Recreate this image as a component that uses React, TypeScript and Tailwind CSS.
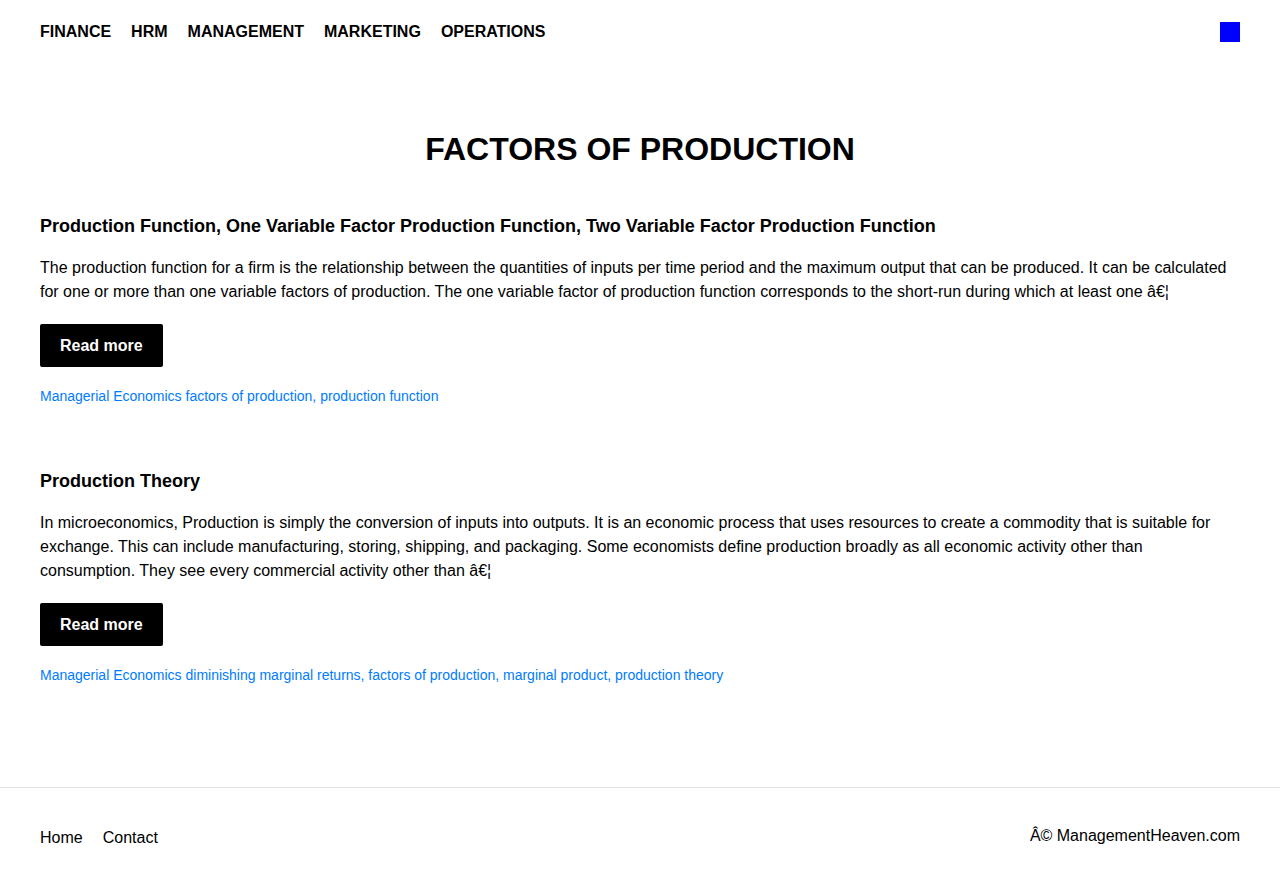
import React from "react";

const font = { fontFamily: '"Liberation Sans", Arial, sans-serif' };

function Article({ title, body, tags }: { title: string; body: string; tags: string }) {
  return (
    <article>
      <h2 className="text-[18px] font-bold leading-[24px] text-black">{title}</h2>
      <p className="mt-[18px] text-[16px] leading-[24px] text-black">{body}</p>
      <div className="mt-[20px]">
        <a className="inline-block rounded-[2px] bg-black px-5 py-[9.5px] text-[16px] font-bold leading-[24px] text-white">
          Read more
        </a>
      </div>
      <div className="mt-[19px] text-[14px] leading-[20px] text-[#007bff]">{tags}</div>
    </article>
  );
}

export default function App() {
  return (
    <div className="min-h-[888px] bg-white text-black" style={font}>
      <header className="flex items-center justify-between px-10 py-5">
        <nav className="flex gap-5 text-[16px] font-bold leading-[24px]">
          <a>FINANCE</a>
          <a>HRM</a>
          <a>MANAGEMENT</a>
          <a>MARKETING</a>
          <a>OPERATIONS</a>
        </nav>
        <div className="h-5 w-5 bg-[#0000ff]" />
      </header>
      <main className="px-10 pt-[65px] pb-[102px]">
        <h1 className="text-center text-[32px] font-bold leading-[40px]">FACTORS OF PRODUCTION</h1>
        <div className="mt-[45px] flex flex-col gap-[63px]">
          <Article
            title="Production Function, One Variable Factor Production Function, Two Variable Factor Production Function"
            body="The production function for a firm is the relationship between the quantities of inputs per time period and the maximum output that can be produced. It can be calculated for one or more than one variable factors of production. The one variable factor of production function corresponds to the short-run during which at least one â€¦"
            tags="Managerial Economics factors of production, production function"
          />
          <Article
            title="Production Theory"
            body="In microeconomics, Production is simply the conversion of inputs into outputs. It is an economic process that uses resources to create a commodity that is suitable for exchange. This can include manufacturing, storing, shipping, and packaging. Some economists define production broadly as all economic activity other than consumption. They see every commercial activity other than â€¦"
            tags="Managerial Economics diminishing marginal returns, factors of production, marginal product, production theory"
          />
        </div>
      </main>
      <footer className="flex items-start justify-between border-t border-[#e0e0e0] px-10 pt-[36px] pb-[39px]">
        <nav className="mt-[2px] flex gap-5 text-[16px] leading-[24px]">
          <a>Home</a>
          <a>Contact</a>
        </nav>
        <div className="text-[16px] leading-[24px]">Â© ManagementHeaven.com</div>
      </footer>
    </div>
  );
}
